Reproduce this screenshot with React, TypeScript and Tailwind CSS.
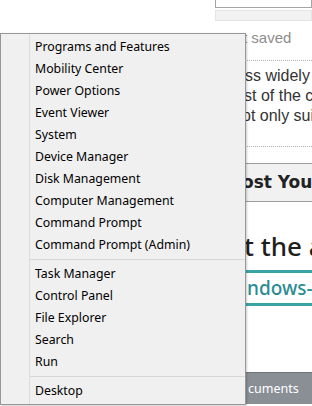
import React from "react";

const topItems = [
  "Programs and Features",
  "Mobility Center",
  "Power Options",
  "Event Viewer",
  "System",
  "Device Manager",
  "Disk Management",
  "Computer Management",
  "Command Prompt",
  "Command Prompt (Admin)",
];

const midItems = ["Task Manager", "Control Panel", "File Explorer", "Search", "Run"];

function MenuItem({ label }: { label: string }) {
  return (
    <div className="h-[22px] flex items-center pl-[5px] pt-[1px] text-[12.3px] text-black whitespace-nowrap">
      {label}
    </div>
  );
}

function Separator() {
  return <div className="h-[7px] pt-[3px]"><div className="border-t border-[#d7d7d7]" /></div>;
}

export default function App() {
  return (
    <div className="relative w-[312px] h-[406px] overflow-hidden bg-white font-['Liberation_Sans',Arial,sans-serif]">
      {/* page behind the menu */}
      <div className="flex flex-col pl-[215px]">
        <div className="h-[8px] border-x border-b border-[#a5a5a5] bg-white" />
        <div className="mt-[2px] h-[11px] bg-[#f2f2f2] border border-[#e4e4e4]" />
        <div className="h-[34px] pt-[9px] pl-[28px] text-[15px] leading-[16px] text-[#8d8d8d] whitespace-nowrap">
          t saved
        </div>
        <div className="mt-[5px] border-t border-dotted border-[#b0b0b0]" />
        <div className="pt-[5px] pl-[30px] text-[16px] leading-[20px] text-[#333] whitespace-nowrap">
          <div>ss widely</div>
          <div className="-ml-[1px]">st of the client</div>
          <div className="-ml-[3px]">pt only suitable</div>
        </div>
        <div className="mt-[20px] border-t border-dotted border-[#b0b0b0]" />
        <div className="mt-[16px] h-[39px] border-y border-[#9d9d9d] bg-[#f1f1f1] flex items-center pl-[27px] text-[17px] font-bold text-[#222] whitespace-nowrap font-['DejaVu_Sans',sans-serif]">
          ost Your
        </div>
        <div className="mt-[28px] pl-[29px] text-[26px] leading-[32px] font-medium text-[#1e1e1e] whitespace-nowrap font-['Noto_Sans',sans-serif]">
          t the all
        </div>
        <div className="mt-[8px] h-[36px] border-y-[3px] border-[#3aa3a3] flex items-center pl-[32px] text-[19px] font-medium text-[#2a8c93] whitespace-nowrap font-['Noto_Sans',sans-serif]">
          ndows-8
        </div>
        <div className="mt-[66px] h-[32px] bg-[#8a8f96] border-t border-[#70757c] flex items-center pl-[33px] pt-[2px] text-[12.5px] text-white whitespace-nowrap font-['Noto_Sans',sans-serif]">
          cuments
        </div>
      </div>

      {/* context menu */}
      <div className="absolute left-0 top-[33px] w-[246px] border border-[#979797] bg-[#f0f0f0] flex font-['Noto_Sans',sans-serif] shadow-[1px_1px_2px_rgba(0,0,0,0.2)]">
        <div className="w-[29px] border-r border-[#dcdcdc]" />
        <div className="flex-1 pt-[2px] pb-[2px]">
          {topItems.map((t) => (
            <MenuItem key={t} label={t} />
          ))}
          <Separator />
          {midItems.map((t) => (
            <MenuItem key={t} label={t} />
          ))}
          <Separator />
          <MenuItem label="Desktop" />
        </div>
      </div>
    </div>
  );
}
